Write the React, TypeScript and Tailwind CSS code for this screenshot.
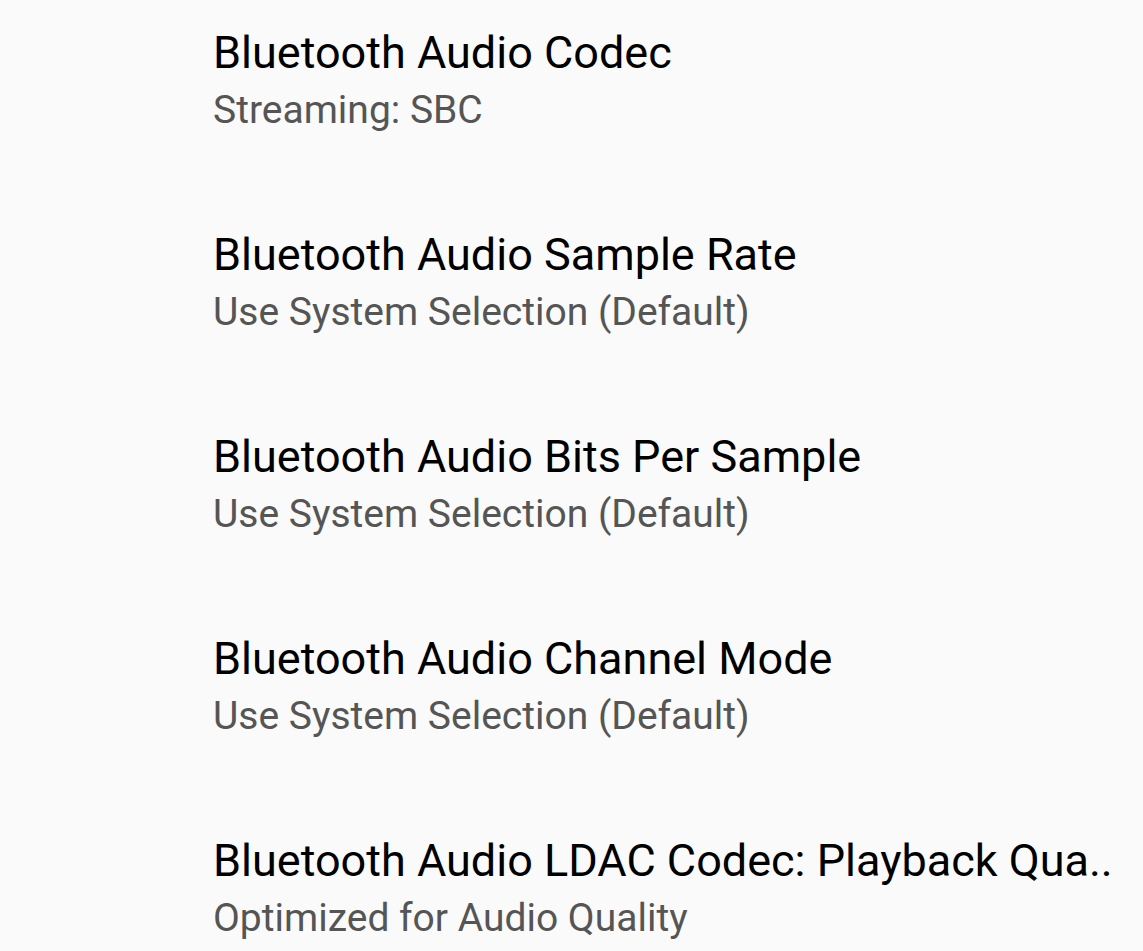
const rows = [
  { title: "Bluetooth Audio Codec", summary: "Streaming: SBC" },
  { title: "Bluetooth Audio Sample Rate", summary: "Use System Selection (Default)" },
  { title: "Bluetooth Audio Bits Per Sample", summary: "Use System Selection (Default)" },
  { title: "Bluetooth Audio Channel Mode", summary: "Use System Selection (Default)" },
  { title: "Bluetooth Audio LDAC Codec: Playback Qua..", summary: "Optimized for Audio Quality" },
];

export default function App() {
  return (
    <div className="h-[951px] w-[1143px] overflow-hidden bg-[#fafafa] font-['Roboto',sans-serif]">
      <div className="flex flex-col pl-[213px] pt-[26px]">
        {rows.map((row) => (
          <div key={row.title} className="flex h-[202px] flex-col">
            <div className="whitespace-nowrap text-[45px] leading-[54px] text-[#000000]">{row.title}</div>
            <div className="whitespace-nowrap text-[39px] leading-[60px] text-[#555555]">{row.summary}</div>
          </div>
        ))}
      </div>
    </div>
  );
}
